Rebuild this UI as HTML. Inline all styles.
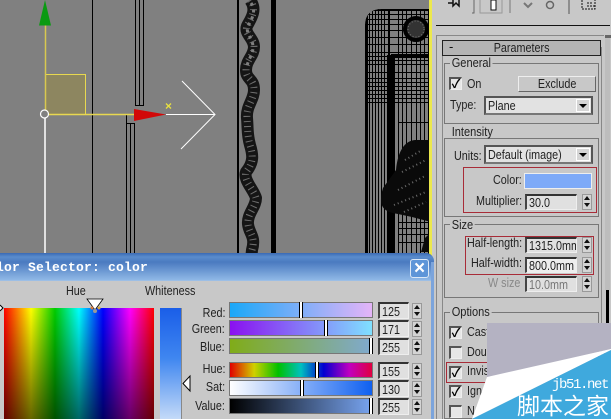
<!DOCTYPE html>
<html><head><meta charset="utf-8"><style>
html,body{margin:0;padding:0;background:#c8c8c8}
#r{position:relative;width:611px;height:419px;overflow:hidden;font-family:"Liberation Sans","Noto Sans CJK SC",sans-serif;font-size:13px;color:#111;background:#c8c8c8}
#r div,#r span{position:absolute;white-space:nowrap}
b{font-weight:normal;display:inline-block;transform:scaleX(.83);transform-origin:0 0}
b.c{transform-origin:50% 0}
.grp{border:1px solid #777;box-sizing:border-box}
.lg{line-height:13px;color:#222;transform:scaleX(.85);transform-origin:0 0;background:#c8c8c8;padding:0 2px}
.l{line-height:14px;color:#222;transform:scaleX(.83);transform-origin:0 0}
.lr{line-height:14px;color:#222;transform:scaleX(.83);transform-origin:100% 0}
.inp{background:#e0e0e0;border-top:2px solid #333;border-left:2px solid #444;border-right:1px solid #eee;border-bottom:1px solid #eee;box-sizing:border-box;line-height:14px;padding-left:2px;color:#222;overflow:hidden}
.spin{width:10px;height:16px;background:#d4d4d4;border:1px solid #999;box-sizing:border-box}
.spin:before{content:"";position:absolute;left:1px;top:1px;border:3px solid transparent;border-top:0;border-bottom:4px solid #111}
.spin:after{content:"";position:absolute;left:1px;top:8px;border:3px solid transparent;border-bottom:0;border-top:4px solid #111}
.chk{width:13px;height:13px;background:#e6e6e6;border-top:2px solid #555;border-left:2px solid #555;border-right:1px solid #eee;border-bottom:1px solid #eee;box-sizing:border-box;font-size:12px;line-height:10px;font-weight:bold;text-align:center;color:#000}
.dd{background:#e2e2e2;border-top:2px solid #555;border-left:2px solid #555;border-right:2px solid #555;border-bottom:2px solid #777;box-sizing:border-box;line-height:15px;padding-left:2px;color:#222}
.dd i{position:absolute;right:1px;top:1px;width:14px;height:13px;background:#d6d6d6;border:1px solid #fff;box-sizing:border-box}
.dd i:after{content:"";position:absolute;left:2px;top:4px;border:4px solid transparent;border-top:4px solid #000;border-bottom:0}
.red{border:1px solid #a82c38;box-sizing:border-box}
.bar{border:1px solid #777;box-sizing:border-box;height:16px}
.mk{width:4px;background:#fff;border-left:1px solid #000;border-right:1px solid #000;box-sizing:border-box;top:-1px;height:16px}
</style></head><body><div id="r">

<svg style="position:absolute;left:0;top:0" width="432" height="260" viewBox="0 0 432 260">
<rect width="432" height="260" fill="#808080"/>
<g stroke="#000" stroke-width="1" fill="none" shape-rendering="crispEdges">
<line x1="92.500" y1="0" x2="92.500" y2="260"/>
<line x1="135.500" y1="0" x2="135.500" y2="105"/><line x1="139.500" y1="0" x2="139.500" y2="105"/><line x1="143.500" y1="0" x2="143.500" y2="105"/>
<path d="M135 105.500H144"/>
<path d="M126.500 114V123.500H134M126.500 123V260M130.500 123V260M134.500 123V260"/>
</g>
<rect x="271" y="0" width="5" height="260" fill="#000"/>
<rect x="237" y="0" width="2" height="260" fill="#000"/>
<g fill="none" stroke-linejoin="round">
<path d="M250 0C258 10 250 20 247 26C244 34 254 38 254 47C254 56 246 60 246 70C246 80 254 78 254 90C254 100 246 106 247 118C248 130 247 134 250 145C253 155 254 162 246 172C243 180 254 190 256 198C256 207 247 214 248 224C249 234 256 236 252 250L251 260" stroke="#151515" stroke-width="12"/>
<path d="M250 0C258 10 250 20 247 26C244 34 254 38 254 47C254 56 246 60 246 70C246 80 254 78 254 90C254 100 246 106 247 118C248 130 247 134 250 145C253 155 254 162 246 172C243 180 254 190 256 198C256 207 247 214 248 224C249 234 256 236 252 250L251 260" stroke="#6e6e6e" stroke-width="7" stroke-dasharray="1 4"/>
<path d="M251 3C257 12 251 20 248 26C245 34 253 38 253 47C253 56 247 60 247 68" stroke="#808080" stroke-width="3" stroke-dasharray="3 4"/>
</g>
<defs><clipPath id="o"><path d="M365 260V26Q365 9 382 9H430V260Z"/></clipPath></defs>
<g clip-path="url(#o)">
<rect x="365" y="9" width="66" height="251" fill="#808080"/>
<g stroke="#000" stroke-width="1" fill="none" shape-rendering="crispEdges">
<path d="M366.500 0V260M369.500 0V260M372.500 0V260M375.500 0V260M378.500 0V260M381.500 0V260M384.500 0V260M398.500 0V260M402.500 0V260M406.500 0V260M411.500 0V260M416.500 0V260M420.500 0V260M424.500 0V260M428.500 0V260"/>
<path d="M365 14.500H430M365 19.500H430M365 24.500H430M365 30.500H430M365 37.500H430M365 44.500H430M365 52.500H430M365 56.500H430M365 60.500H430M365 64.500H430M365 72.500H430M365 78.500H430M365 82.500H430M365 86.500H430M365 90.500H430M365 94.500H430M365 98.500H430M365 102.500H430"/>
<path d="M398 122.500H430M398 222.500H430M398 228.500H430M398 234.500H430M398 242.500H430"/>
</g>
<rect x="365" y="9" width="65" height="2" fill="#000"/>
<rect x="365" y="9" width="3" height="251" fill="#000"/>
<rect x="387" y="55" width="8" height="205" fill="#000"/>
<rect x="391" y="54" width="40" height="4" fill="#000"/>
<rect x="388" y="9" width="2" height="50" fill="#000"/>
<circle cx="416" cy="29" r="11" fill="#333" stroke="#000" stroke-width="4"/>
<circle cx="416" cy="29" r="8" fill="none" stroke="#777" stroke-width="1" stroke-dasharray="1 2"/>
<path d="M396 170C398 150 405 141 415 140H431V222L412 217L398 214C382 212 378 205 383 188Z" fill="#0a0a0a"/>
<path d="M425 238L431 232V252H421Z" fill="#0a0a0a"/>
<path d="M405 160L422 150M402 172L426 160M398 190L425 176M394 205L426 192M404 212L426 202" stroke="#6a6a6a" stroke-width="2" stroke-dasharray="1 3" fill="none"/>
</g>
<g fill="none">
<path d="M45 114V260" stroke="#fff" stroke-width="1.500"/>
<path d="M166 114.500H215M182 81L215 114.500L181 149" stroke="#fff" stroke-width="1"/>
<rect x="45.500" y="74.500" width="40" height="40" fill="#8d8660" stroke="#e8d850" stroke-width="1"/>
<path d="M45.500 25V114" stroke="#d8c850" stroke-width="1.500"/>
<path d="M45 114.500H134" stroke="#e8d850" stroke-width="1.500"/>
<circle cx="44.500" cy="114" r="4" stroke="#fff" stroke-width="1.200" fill="#808080"/>
</g>
<path d="M45 0L51 25.500H39Z" fill="#0a9a12"/>
<path d="M134 109L166 114.500L134 121Z" fill="#d20808"/>
<path d="M166 103.500L171 108.500M171 103.500L166 108.500" stroke="#e8e040" stroke-width="1.300"/>
</svg>

<div style="left:429px;top:0;width:3px;height:260px;background:#ece84c"></div>
<div style="left:432px;top:0;width:179px;height:419px;background:#c8c8c8"></div>
<svg style="position:absolute;left:432px;top:0" width="179" height="28" viewBox="0 0 179 28">
<path d="M16 3H21M21 0V6L24 3L27 6V0" stroke="#111" stroke-width="1.500" fill="none"/>
<path d="M42 0V13H40" stroke="#666" fill="none"/><path d="M48 0V13H70V0" stroke="#999" fill="#c8c8c8"/>
<rect x="59" y="0" width="5" height="10" fill="#fff" stroke="#111" stroke-width="1"/>
<path d="M78 0V13" stroke="#777"/>
<path d="M92 3L96 7L100 3" stroke="#777" stroke-width="2" fill="none"/>
<circle cx="118" cy="5" r="3.500" stroke="#666" stroke-width="1.500" fill="none"/>
<path d="M137 0V14" stroke="#555"/>
<path d="M150 0V9H163V0M155 3H160M155 6H163" stroke="#111" stroke-width="1" stroke-dasharray="2 1" fill="none"/>
</svg>
<div style="left:436px;top:25px;width:174px;height:1px;background:#111"></div>
<div style="left:436px;top:35px;width:168px;height:384px;border-left:1px solid #888;border-top:1px solid #888;box-sizing:border-box"></div>
<div style="left:605px;top:35px;width:5px;height:255px;background:#bdbdbd"></div>
<div style="left:605px;top:35px;width:6px;height:3px;background:#666"></div>
<div style="left:606px;top:290px;width:3px;height:35px;background:#000"></div>
<div style="left:604px;top:325px;width:1px;height:94px;background:#777"></div>
<div style="left:442px;top:47px;width:1px;height:372px;background:#888"></div>
<div style="left:601px;top:47px;width:1px;height:372px;background:#888"></div>

<div style="left:442px;top:40px;width:159px;height:16px;border:1px solid #222;background:#b4b4b4;box-sizing:border-box;text-align:center;line-height:14px;color:#222"><b class="c">Parameters</b></div>
<div style="left:449px;top:40px;line-height:14px">-</div>

<div class="grp" style="left:444px;top:63px;width:155px;height:61px"></div>
<div class="lg" style="left:450px;top:56px">General</div>
<div class="chk" style="left:449px;top:77px">✓</div>
<div class="l" style="left:467px;top:77px">On</div>
<div style="left:518px;top:76px;width:78px;height:16px;background:#c8c8c8;border-top:1px solid #eee;border-left:1px solid #eee;border-right:1px solid #666;border-bottom:1px solid #666;box-sizing:border-box;text-align:center;line-height:14px;color:#222"><b class="c">Exclude</b></div>
<div class="l" style="left:450px;top:98px">Type:</div>
<div class="dd" style="left:484px;top:96px;width:109px;height:19px"><b>Plane</b><i></i></div>

<div class="grp" style="left:444px;top:138px;width:155px;height:79px"></div>
<div class="lg" style="left:450px;top:125px">Intensity</div>
<div class="l" style="left:454px;top:149px">Units:</div>
<div class="dd" style="left:484px;top:145px;width:109px;height:19px"><b>Default (image)</b><i></i></div>
<div class="red" style="left:463px;top:167px;width:134px;height:46px"></div>
<div class="l" style="left:493px;top:173px">Color:</div>
<div style="left:524px;top:173px;width:68px;height:16px;background:#7eaaf8;border:1px solid #eee;box-sizing:border-box"></div>
<div class="l" style="left:476px;top:194px">Multiplier:</div>
<div class="inp" style="left:525px;top:194px;width:52px;height:16px"><b>30.0</b></div>
<div class="spin" style="left:582px;top:194px"></div>

<div class="grp" style="left:444px;top:224px;width:155px;height:74px"></div>
<div class="lg" style="left:450px;top:218px">Size</div>
<div class="red" style="left:465px;top:236px;width:129px;height:39px"></div>
<div class="l" style="left:467px;top:236px">Half-length:</div>
<div class="inp" style="left:525px;top:237px;width:52px;height:16px"><b>1315.0mm</b></div>
<div class="spin" style="left:582px;top:237px"></div>
<div class="l" style="left:471px;top:256px">Half-width:</div>
<div class="inp" style="left:525px;top:257px;width:52px;height:16px;background:#eee"><b>800.0mm</b></div>
<div class="spin" style="left:582px;top:257px"></div>
<div class="l" style="left:488px;top:276px;color:#888">W size</div>
<div class="inp" style="left:525px;top:276px;width:52px;height:16px;color:#777"><b>10.0mm</b></div>
<div class="spin" style="left:582px;top:276px"></div>

<div class="grp" style="left:444px;top:312px;width:155px;height:107px"></div>
<div class="lg" style="left:450px;top:305px">Options</div>
<div class="chk" style="left:449px;top:326px">✓</div><div class="l" style="left:467px;top:325px">Cast</div>
<div class="chk" style="left:449px;top:346px"></div><div class="l" style="left:467px;top:345px">Dou</div>
<div class="red" style="left:446px;top:362px;width:60px;height:21px"></div>
<div class="chk" style="left:449px;top:366px">✓</div><div class="l" style="left:467px;top:364px">Invis</div>
<div class="chk" style="left:449px;top:385px">✓</div><div class="l" style="left:467px;top:384px">Ign</div>
<div class="chk" style="left:449px;top:405px"></div><div class="l" style="left:467px;top:404px">N</div>

<div style="left:0;top:253px;width:434px;height:28px;background:linear-gradient(#3a6ab4 0,#5a8ccc 4px,#4a7ac0 9px,#8fb8e6 27px,#a8c4e4 28px);border-radius:0 8px 0 0"></div>
<div style="left:-20px;top:258px;font:bold 13px 'Liberation Mono',monospace;color:#fff;line-height:20px;letter-spacing:.2px">Color Selector: color</div>
<div style="left:410px;top:259px;width:19px;height:19px;background:#5d95d8;border:1px solid #dbe8f6;border-radius:3px;box-sizing:border-box;color:#fff;font-size:19px;line-height:17px;text-align:center;font-weight:bold">×</div>
<div style="left:0;top:281px;width:431px;height:138px;background:#c8c8c8"></div>
<div style="left:431px;top:262px;width:3px;height:157px;background:#7ba4dc"></div>

<div class="l" style="left:66px;top:284px">Hue</div>
<div class="l" style="left:145px;top:284px">Whiteness</div>
<div style="left:4px;top:308px;width:150px;height:111px;background:linear-gradient(to bottom,rgba(0,0,0,0) 0,rgba(0,0,0,.6) 100%),linear-gradient(to right,#f00 0,#ff0 18%,#0c0 34%,#0ff 50%,#00f 66%,#f0f 84%,#f00 100%)"></div>
<svg style="position:absolute;left:0;top:295px" width="120" height="20" viewBox="0 0 120 20">
<path d="M87 4H103L95 15Z" fill="#fff" stroke="#000" stroke-width=".8"/>
<circle cx="92" cy="13" r="1.500" fill="#d87838"/><circle cx="99" cy="13" r="1.500" fill="#d8a840"/><circle cx="95" cy="16" r="2" fill="#999"/>
<path d="M0 10L3 13L0 16" fill="#fff" stroke="#000"/>
</svg>
<div style="left:160px;top:308px;width:22px;height:111px;background:linear-gradient(#1a5ee8 0,#3f86f0 45%,#c4daf8 100%);border-right:1px solid #888;box-sizing:border-box"></div>
<svg style="position:absolute;left:182px;top:374px" width="10" height="20" viewBox="0 0 10 20"><path d="M8 2V17L1 9.500Z" fill="#fff" stroke="#000"/></svg>

<div class="lr" style="right:386px;top:306px">Red:</div>
<div class="lr" style="right:386px;top:322px">Green:</div>
<div class="lr" style="right:386px;top:340px">Blue:</div>
<div class="lr" style="right:386px;top:362px">Hue:</div>
<div class="lr" style="right:386px;top:380px">Sat:</div>
<div class="lr" style="right:386px;top:399px">Value:</div>

<div class="bar" style="left:229px;top:302px;width:144px;background:linear-gradient(to right,#1aa8f8,#e4b4f8)"><div class="mk" style="left:69px"></div></div>
<div class="bar" style="left:229px;top:320px;width:144px;background:linear-gradient(to right,#8a10f0,#80e0ff)"><div class="mk" style="left:94px"></div></div>
<div class="bar" style="left:229px;top:338px;width:144px;background:linear-gradient(to right,#80ac18,#80aad0)"><div class="mk" style="left:139px"></div></div>
<div class="bar" style="left:229px;top:362px;width:144px;background:linear-gradient(to right,#e00000,#d0d000 17%,#00c000 34%,#00c0c0 50%,#0000d0 66%,#c000c0 84%,#e00040)"><div class="mk" style="left:85px"></div></div>
<div class="bar" style="left:229px;top:380px;width:144px;background:linear-gradient(to right,#fff,#0f60f0)"><div class="mk" style="left:70px"></div></div>
<div class="bar" style="left:229px;top:398px;width:144px;background:linear-gradient(to right,#000,#78a4f0)"><div class="mk" style="left:139px"></div></div>

<div class="inp" style="left:378px;top:302px;width:31px;height:17px;line-height:15px"><b>125</b></div><div class="spin" style="left:412px;top:303px"></div>
<div class="inp" style="left:378px;top:320px;width:31px;height:17px;line-height:15px"><b>171</b></div><div class="spin" style="left:412px;top:321px"></div>
<div class="inp" style="left:378px;top:338px;width:31px;height:17px;line-height:15px"><b>255</b></div><div class="spin" style="left:412px;top:339px"></div>
<div class="inp" style="left:378px;top:362px;width:31px;height:17px;line-height:15px"><b>155</b></div><div class="spin" style="left:412px;top:363px"></div>
<div class="inp" style="left:378px;top:380px;width:31px;height:17px;line-height:15px"><b>130</b></div><div class="spin" style="left:412px;top:381px"></div>
<div class="inp" style="left:378px;top:398px;width:31px;height:17px;line-height:15px"><b>255</b></div><div class="spin" style="left:412px;top:399px"></div>

<svg style="position:absolute;left:0;top:0" width="611" height="419" viewBox="0 0 611 419">
<path d="M487 323H611V349L487 378Z" fill="#b4b2c2"/>
<path d="M472 419L487 377L611 349V350Z" fill="#fff"/>
<path d="M472 419L611 350V419Z" fill="#3fa9dd"/>
</svg>
<div style="left:552px;top:377px;font:14px 'Liberation Mono',monospace;color:#fff;line-height:16px;letter-spacing:-1.400px">jb51.net</div>
<div style="left:517px;top:393px;font-size:23px;line-height:26px;color:#fff">脚本之家</div>
</div></body></html>
